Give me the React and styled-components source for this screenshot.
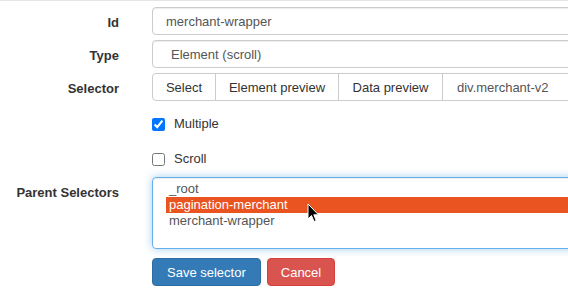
import React from 'react'
import styled, { createGlobalStyle } from 'styled-components'

const GlobalStyle = createGlobalStyle`
  html, body {
    margin: 0;
    padding: 0;
    background: #fff;
    overflow: hidden;
  }
  body {
    font-family: "Liberation Sans", Arial, sans-serif;
    font-size: 13px;
    color: #333;
  }
`

const Panel = styled.div`
  border-top: 1px solid #e5e5e5;
  width: 568px;
  height: 300px;
  overflow: hidden;
`

const Form = styled.div`
  display: flex;
  flex-direction: column;
  padding-top: 6px;
`

const Row = styled.div`
  display: grid;
  grid-template-columns: 119px 449px;
  column-gap: 33px;
  margin-top: ${p => p.$gap || 0}px;
  min-height: ${p => p.$height || 28}px;
  align-items: ${p => (p.$center ? 'center' : 'start')};
`

const Label = styled.label`
  font-weight: bold;
  text-align: right;
  line-height: 18px;
  padding-top: 7px;
  white-space: nowrap;
`

const Field = styled.div`
  width: 430px;
  height: 28px;
  box-sizing: border-box;
  border: 1px solid #ccc;
  border-radius: 4px;
  box-shadow: inset 0 1px 1px rgba(0, 0, 0, 0.075);
  color: #555;
  display: flex;
  align-items: center;
  padding-left: ${p => p.$pad || 13}px;
`

const Group = styled.div`
  display: flex;
  width: 430px;
  height: 28px;
`

const GroupItem = styled.div`
  box-sizing: border-box;
  height: 28px;
  width: ${p => (p.$w ? `${p.$w}px` : 'auto')};
  flex: ${p => (p.$w ? 'none' : '1')};
  border: 1px solid #ccc;
  margin-left: -1px;
  display: flex;
  align-items: center;
  justify-content: ${p => (p.$w ? 'center' : 'flex-start')};
  padding-left: ${p => (p.$w ? 0 : 14)}px;
  color: ${p => (p.$w ? '#333' : '#555')};
  background: #fff;
  &:first-child {
    margin-left: 0;
    border-radius: 4px 0 0 4px;
  }
`

const Check = styled.label`
  display: flex;
  align-items: center;
  gap: 9px;
  color: #333;
  line-height: 18px;

  input {
    margin: 0;
    width: 13px;
    height: 13px;
    position: relative;
    top: 1px;
  }
`

const ListBox = styled.div`
  position: relative;
  width: 430px;
  height: 72px;
  box-sizing: border-box;
  border: 1px solid #66afe9;
  border-radius: 4px;
  box-shadow: inset 0 1px 1px rgba(0, 0, 0, 0.075),
    0 0 8px rgba(102, 175, 233, 0.6);
  padding: 3px 0 0 13px;
  color: #555;
`

const Option = styled.div`
  height: 16px;
  line-height: 16px;
  padding-left: 3px;
  background: ${p => (p.$selected ? '#e95420' : 'transparent')};
  color: ${p => (p.$selected ? '#fff' : '#555')};
`

const Pointer = styled.svg`
  position: absolute;
  left: 154px;
  top: 25px;
`

const Buttons = styled.div`
  display: flex;
  gap: 6px;
`

const Button = styled.button`
  height: 28px;
  padding: 0 ${p => (p.$danger ? 13 : 14)}px;
  font-family: inherit;
  font-size: 13px;
  color: #fff;
  border-radius: 4px;
  border: 1px solid ${p => (p.$danger ? '#d43f3a' : '#2e6da4')};
  background: ${p => (p.$danger ? '#d9534f' : '#337ab7')};
`

const options = ['_root', 'pagination-merchant', 'merchant-wrapper']

export default function App() {
  return (
    <Panel>
      <GlobalStyle />
      <Form>
        <Row>
          <Label>Id</Label>
          <Field>merchant-wrapper</Field>
        </Row>
        <Row $gap={5}>
          <Label>Type</Label>
          <Field $pad={18}>Element (scroll)</Field>
        </Row>
        <Row $gap={5}>
          <Label>Selector</Label>
          <Group>
            <GroupItem $w={64}>Select</GroupItem>
            <GroupItem $w={124}>Element preview</GroupItem>
            <GroupItem $w={105}>Data preview</GroupItem>
            <GroupItem>div.merchant-v2</GroupItem>
          </Group>
        </Row>
        <Row $gap={5} $height={35} $center>
          <span />
          <Check>
            <input type="checkbox" defaultChecked />
            Multiple
          </Check>
        </Row>
        <Row $height={35} $center>
          <span />
          <Check>
            <input type="checkbox" />
            Scroll
          </Check>
        </Row>
        <Row $gap={1}>
          <Label>Parent Selectors</Label>
          <ListBox>
            {options.map(o => (
              <Option key={o} $selected={o === 'pagination-merchant'}>
                {o}
              </Option>
            ))}
            <Pointer width="13" height="21" viewBox="0 0 13 21">
              <path
                d="M1 1 L1 16 L4.5 12.5 L7 18.5 L9.2 17.6 L6.8 11.8 L11.5 11.8 Z"
                fill="#000"
                stroke="#fff"
                strokeWidth="1"
                strokeLinejoin="round"
              />
            </Pointer>
          </ListBox>
        </Row>
        <Row $gap={9}>
          <span />
          <Buttons>
            <Button>Save selector</Button>
            <Button $danger>Cancel</Button>
          </Buttons>
        </Row>
      </Form>
    </Panel>
  )
}
